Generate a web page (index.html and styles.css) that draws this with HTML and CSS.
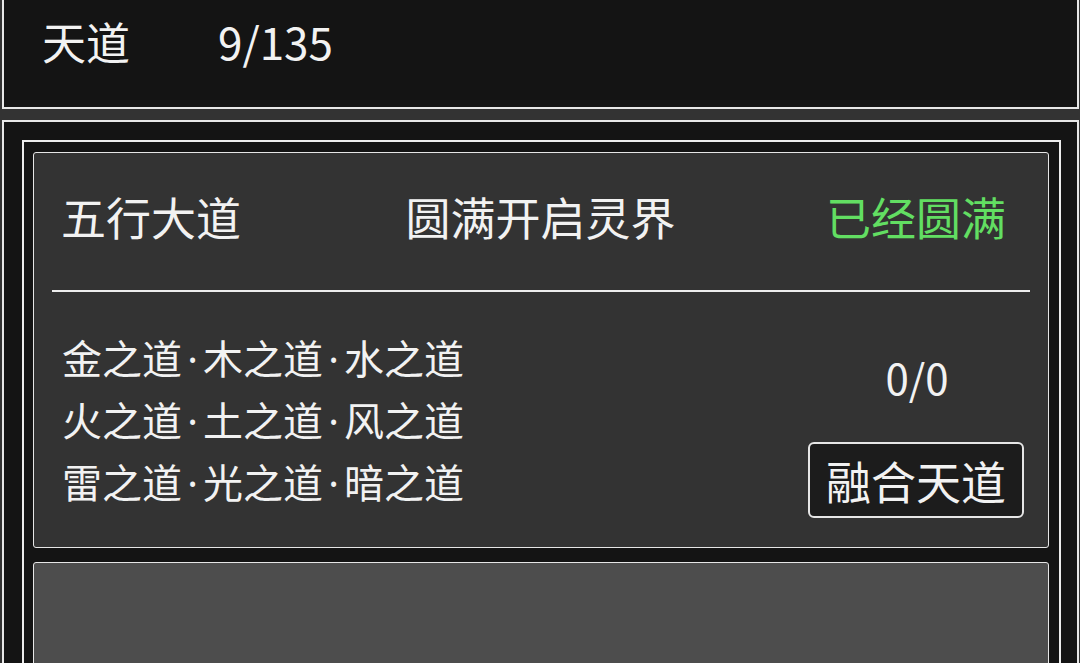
FILE: index.html
```html
<!DOCTYPE html>
<html lang="zh-CN">
<head>
<meta charset="utf-8">
<title>天道</title>
<link rel="stylesheet" href="styles.css">
</head>
<body>
<div class="page">
  <header class="topbar">
    <span class="topbar-title">天道</span>
    <span class="topbar-count">9/135</span>
  </header>
  <main class="panel">
    <div class="frame">
      <section class="card">
        <div class="card-head">
          <span class="head-name">五行大道</span>
          <span class="head-desc">圆满开启灵界</span>
          <span class="head-status">已经圆满</span>
        </div>
        <div class="card-body">
          <div class="ways">
            <p class="way-line">金之道<span class="dot">·</span>木之道<span class="dot">·</span>水之道</p>
            <p class="way-line">火之道<span class="dot">·</span>土之道<span class="dot">·</span>风之道</p>
            <p class="way-line">雷之道<span class="dot">·</span>光之道<span class="dot">·</span>暗之道</p>
          </div>
          <div class="side">
            <span class="progress">0/0</span>
            <button class="fuse-btn" type="button">融合天道</button>
          </div>
        </div>
      </section>
      <section class="card card-empty"></section>
    </div>
  </main>
</div>
</body>
</html>
```

FILE: styles.css
```css
* {
  box-sizing: border-box;
}

html, body {
  margin: 0;
  padding: 0;
  height: 100%;
  overflow: hidden;
}

body {
  background: #333333;
  color: #f2f2f2;
  font-family: "Noto Sans CJK SC", "Noto Sans", sans-serif;
}

.page {
  padding: 0 1px 0 2px;
}

.topbar {
  display: flex;
  align-items: flex-start;
  gap: 88px;
  height: 109px;
  padding: 11px 0 0 38px;
  background: #141414;
  border: 2px solid #e8e8e8;
  border-top: 0;
  font-size: 44px;
  line-height: 60px;
}

.panel {
  margin-top: 11px;
  height: 600px;
  background: #141414;
  border: 2px solid #e8e8e8;
  border-bottom: 0;
  padding: 18px 16px 0 18px;
}

.frame {
  height: 100%;
  border: 2px solid #ececec;
  border-bottom: 0;
  padding: 10px 10px 0 9px;
}

.card {
  background: #333333;
  border: 1px solid #e6e6e6;
  border-radius: 3px;
}

.card-head {
  display: grid;
  grid-template-columns: 1fr auto 1fr;
  align-items: center;
  height: 139px;
  margin: 0 18px;
  padding: 0 6px 10px 9px;
  border-bottom: 2px solid #ededed;
  font-size: 45px;
  line-height: 60px;
}

.head-name {
  justify-self: start;
}

.head-desc {
  justify-self: center;
  padding-right: 4px;
}

.head-status {
  justify-self: end;
  width: 216px;
  text-align: center;
  color: #62de62;
}

.card-body {
  display: flex;
  justify-content: space-between;
  align-items: flex-start;
  height: 255px;
  padding: 35px 24px 0 28px;
}

.ways {
  font-size: 40px;
  line-height: 60px;
}

.way-line {
  margin: 0;
  white-space: nowrap;
}

.dot {
  display: inline-block;
  width: 21px;
  text-align: center;
  font-family: "Noto Sans", sans-serif;
}

.side {
  display: flex;
  flex-direction: column;
  align-items: center;
  width: 216px;
  padding-top: 20px;
  gap: 35px;
}

.progress {
  font-size: 42px;
  line-height: 60px;
  padding-left: 2px;
}

.fuse-btn {
  width: 216px;
  height: 76px;
  padding: 0;
  background: #1c1c1c;
  color: #f2f2f2;
  border: 2px solid #e6e6e6;
  border-radius: 6px;
  font-family: inherit;
  font-size: 45px;
  line-height: 1;
}

.card-empty {
  margin-top: 14px;
  height: 200px;
  background: #4d4d4d;
}
```
